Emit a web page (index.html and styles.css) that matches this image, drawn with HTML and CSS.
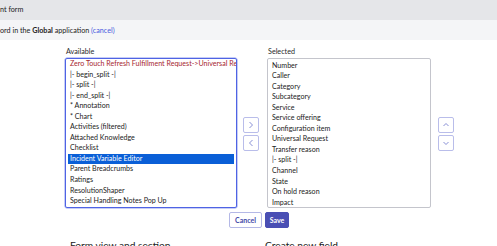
FILE: index.html
```html
<!DOCTYPE html>
<html lang="en">
<head>
  <meta charset="UTF-8" />
  <meta name="viewport" content="width=device-width, initial-scale=1.0"/>
  <title>Form Layout</title>
  <link rel="stylesheet" href="styles.css">
</head>
<body>
  <div class="titlebar">nt form</div>
  <div class="notice">ord in the <b>Global</b> application <a href="#">(cancel)</a></div>

  <div class="slushbucket">
    <div class="bucket">
      <div class="bucket-label">Available</div>
      <div class="listbox focused">
        <div class="item warn">Zero Touch Refresh Fulfillment Request-&gt;Universal Request</div>
        <div class="item">|- begin_split -|</div>
        <div class="item">|- split -|</div>
        <div class="item">|- end_split -|</div>
        <div class="item">* Annotation</div>
        <div class="item">* Chart</div>
        <div class="item">Activities (filtered)</div>
        <div class="item">Attached Knowledge</div>
        <div class="item">Checklist</div>
        <div class="item active">Incident Variable Editor</div>
        <div class="item">Parent Breadcrumbs</div>
        <div class="item">Ratings</div>
        <div class="item">ResolutionShaper</div>
        <div class="item">Special Handling Notes Pop Up</div>
      </div>
    </div>

    <div class="movers">
      <button class="icon-btn"><svg width="8" height="8" viewBox="0 0 8 8"><path d="M2.5 1 L5.5 4 L2.5 7" /></svg></button>
      <button class="icon-btn"><svg width="8" height="8" viewBox="0 0 8 8"><path d="M5.5 1 L2.5 4 L5.5 7" /></svg></button>
    </div>

    <div class="bucket selected">
      <div class="bucket-label">Selected</div>
      <div class="listbox">
        <div class="item">Number</div>
        <div class="item">Caller</div>
        <div class="item">Category</div>
        <div class="item">Subcategory</div>
        <div class="item">Service</div>
        <div class="item">Service offering</div>
        <div class="item">Configuration item</div>
        <div class="item">Universal Request</div>
        <div class="item">Transfer reason</div>
        <div class="item">|- split -|</div>
        <div class="item">Channel</div>
        <div class="item">State</div>
        <div class="item">On hold reason</div>
        <div class="item">Impact</div>
      </div>
    </div>

    <div class="movers">
      <button class="icon-btn"><svg width="8" height="8" viewBox="0 0 8 8"><path d="M1.5 5 L4 2.5 L6.5 5" /></svg></button>
      <button class="icon-btn"><svg width="8" height="8" viewBox="0 0 8 8"><path d="M1.5 3 L4 5.5 L6.5 3" /></svg></button>
    </div>
  </div>

  <div class="actions">
    <button class="btn btn-cancel">Cancel</button>
    <button class="btn btn-save">Save</button>
  </div>

  <div class="sections">
    <h3 class="section-title first">Form view and section</h3>
    <h3 class="section-title">Create new field</h3>
  </div>
</body>
</html>
```

FILE: styles.css
```css
* {
  margin: 0;
  padding: 0;
  box-sizing: border-box;
}

body {
  font-family: 'Lato', 'Liberation Sans', sans-serif;
  font-size: 7.1px;
  color: #222;
  background: #fff;
  overflow: hidden;
}

.titlebar {
  height: 20px;
  line-height: 19px;
  background: #e5e6e9;
  color: #222;
  font-size: 7.2px;
  white-space: nowrap;
}

.notice {
  height: 20px;
  line-height: 21px;
  background: #f4f5f7;
  color: #222;
  font-size: 7.2px;
  white-space: nowrap;
}

.notice b {
  font-weight: 700;
}

.notice a {
  color: #4a5be0;
  text-decoration: none;
}

.slushbucket {
  display: flex;
  align-items: flex-end;
  padding-left: 65px;
  margin-top: 7px;
}

.bucket {
  width: 172px;
}

.bucket.selected {
  width: 164px;
  margin-left: 8px;
}

.bucket-label {
  height: 11px;
  line-height: 9px;
  padding-left: 1px;
  font-size: 7.2px;
  color: #2a2a2a;
}

.listbox {
  height: 150px;
  border: 1px solid #c4c5cc;
  border-radius: 2px;
  padding: 1.5px 2px 0;
  overflow: hidden;
}

.listbox.focused {
  border-color: #4f63e4;
  box-shadow: 0 0 0 0.5px #8e9cf0;
  padding-top: 0;
}

.item {
  height: 10.55px;
  line-height: 10.55px;
  padding-left: 2px;
  white-space: nowrap;
  color: #222;
}

.item.warn {
  color: #a6262f;
}

.item.active {
  background: #0a5fd7;
  color: #fff;
}

.movers {
  display: flex;
  flex-direction: column;
  gap: 2px;
  height: 150px;
  justify-content: center;
  margin-left: 6px;
  padding-top: 1px;
}

.movers:last-child {
  margin-left: 7px;
}

.icon-btn {
  width: 16px;
  height: 16px;
  background: #fff;
  border: 1px solid #b9bdea;
  border-radius: 2px;
  display: flex;
  align-items: center;
  justify-content: center;
}

.icon-btn path {
  fill: none;
  stroke: #7b82cf;
  stroke-width: 0.9;
}

.actions {
  display: flex;
  justify-content: center;
  gap: 3px;
  margin-top: 4px;
  padding-left: 21px;
}

.btn {
  height: 16px;
  border-radius: 2px;
  font-family: 'Lato', 'Liberation Sans', sans-serif;
  font-size: 7px;
  font-weight: 700;
  padding: 0 2px;
}

.btn-cancel {
  width: 33px;
  background: #fff;
  border: 1px solid #b4b8e6;
  color: #3f48a8;
}

.btn-save {
  width: 24px;
  background: #4a4fb4;
  border: 1px solid #4a4fb4;
  color: #fff;
}

.sections {
  display: flex;
  margin-top: 11px;
  padding-left: 70px;
}

.section-title {
  font-size: 10.2px;
  font-weight: 400;
  color: #222;
  line-height: 12px;
}

.section-title.first {
  width: 195px;
}
```
